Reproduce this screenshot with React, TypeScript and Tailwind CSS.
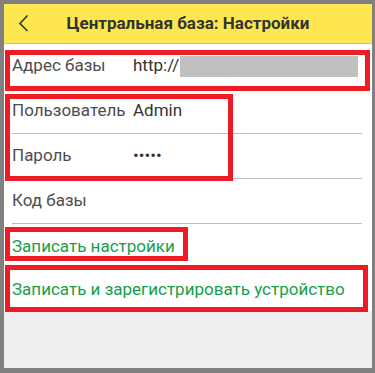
import React from 'react';

const font = { fontFamily: 'Roboto, "Noto Sans", sans-serif' };

type Field = { label: string; value?: string; blur?: boolean };

const fields: Field[] = [
  { label: 'Адрес базы', value: 'http://', blur: true },
  { label: 'Пользователь', value: 'Admin' },
  { label: 'Пароль', value: '•••••' },
  { label: 'Код базы' },
];

export default function App() {
  return (
    <div style={font} className="relative h-[373px] w-[375px] bg-[#808080] pt-[4px] pl-[4px] pr-[3px] pb-[5px]">
      <div className="flex h-full flex-col bg-[#efefef]">
        {/* Header */}
        <div className="relative flex h-[40px] items-center justify-center border-b border-[#c9c28f] bg-[#fde64f]">
          <svg className="absolute left-[14px] top-[10px]" width="14" height="18" viewBox="0 0 14 18" fill="none">
            <path d="M9.5 1.5 L2 9.5 L9.5 17" stroke="#333" strokeWidth="1.6" />
          </svg>
          <h1 className="text-[17px] font-bold text-[#333]">Центральная база: Настройки</h1>
        </div>

        {/* Fields */}
        <div className="bg-white">
          {fields.map(f => (
            <div key={f.label} className="ml-[8px] mr-[10px] flex h-[45px] items-center border-b border-[#bdbdbd]">
              <span className="w-[121px] text-[17px] text-[#4d4d4d]">{f.label}</span>
              {f.value && <span className="text-[17px] text-[#333]">{f.value}</span>}
              {f.blur && <span className="ml-auto mr-[4px] h-[21px] w-[178px] bg-[#c0c0c0]" />}
            </div>
          ))}
          <div className="flex h-[45px] items-center pl-[8px] text-[17px] text-[#16a04b]">Записать настройки</div>
          <div className="flex h-[42px] items-center pl-[8px] text-[17px] text-[#16a04b]">Записать и зарегистрировать устройство</div>
        </div>
      </div>

      {/* Red annotation frames */}
      <div className="pointer-events-none absolute left-[5px] top-[50px] h-[41px] w-[365px] border-[5px] border-[#ed1c24]" />
      <div className="pointer-events-none absolute left-[5px] top-[94px] h-[87px] w-[228px] border-[5px] border-[#ed1c24]" />
      <div className="pointer-events-none absolute left-[5px] top-[227px] h-[34px] w-[183px] border-[5px] border-[#ed1c24]" />
      <div className="pointer-events-none absolute left-[5px] top-[265px] h-[47px] w-[363px] border-[5px] border-[#ed1c24]" />
    </div>
  );
}
